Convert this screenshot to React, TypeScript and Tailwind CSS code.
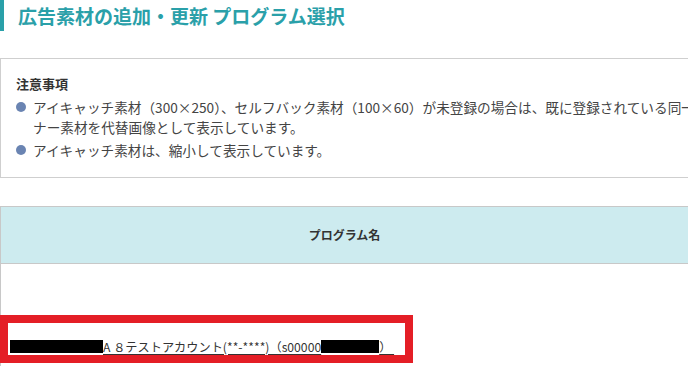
export default function App() {
  return (
    <div
      className="relative h-[366px] w-[688px] overflow-hidden bg-white text-[#333]"
      style={{ fontFamily: '"Noto Sans CJK JP", "Noto Sans", sans-serif' }}
    >
      <h1 className="flex h-[31px] items-center border-l-4 border-[#2aa0a9] pl-[14px] text-[19px] font-bold leading-none text-[#2aa0a9]">
        広告素材の追加・更新 プログラム選択
      </h1>

      <div className="mt-[27px] h-[120px] w-[760px] border border-[#cfcfcf] pl-[15px] pt-[15px]">
        <p className="text-[13px] font-bold leading-[20px] text-[#333]">注意事項</p>
        <ul className="mt-[3px] space-y-[3px] text-[13.65px] leading-[20px] text-[#444]">
          <li className="flex gap-[7px]">
            <span className="mt-[5px] h-[10px] w-[10px] shrink-0 rounded-full bg-[#6a84b2]" />
            <span className="whitespace-nowrap">
              アイキャッチ素材（300×250）、セルフバック素材（100×60）が未登録の場合は、既に登録されている同一サイズのバ
              <br />
              ナー素材を代替画像として表示しています。
            </span>
          </li>
          <li className="flex gap-[7px]">
            <span className="mt-[5px] h-[10px] w-[10px] shrink-0 rounded-full bg-[#6a84b2]" />
            <span>アイキャッチ素材は、縮小して表示しています。</span>
          </li>
        </ul>
      </div>

      <div className="mt-[28px] w-[688px] border-l border-t border-[#c8c8c8]">
        <div className="flex h-[57px] items-center justify-center border-b border-[#c8c8c8] bg-[#cdebef] text-[12px] font-bold text-[#333]">
          プログラム名
        </div>
        <div className="h-[120px] pl-[9px] pt-[70px]">
          <a className="inline-flex items-center whitespace-pre text-[12.2px] leading-[16px] text-[#333] underline underline-offset-2">
            <span className="inline-block h-[13px] w-[93px] bg-black" />
            <span>A ８テストアカウント(**-****)（s00000</span>
            <span className="inline-block h-[13px] w-[58px] bg-black" />
            <span>） </span>
          </a>
        </div>
      </div>

      <div className="pointer-events-none absolute left-0 top-[315px] h-[48px] w-[413px] border-[8px] border-[#e41e26]" />
    </div>
  );
}
